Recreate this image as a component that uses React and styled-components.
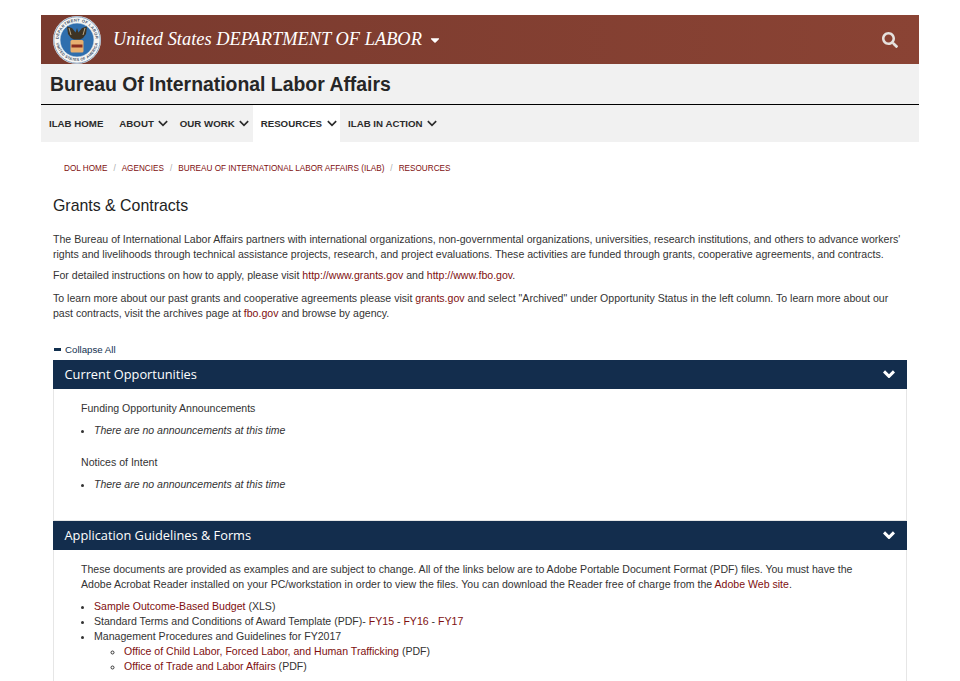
import styled, { createGlobalStyle } from "styled-components";
import { FaSearch, FaCaretDown } from "react-icons/fa";

const GlobalStyle = createGlobalStyle`
html, body {
    margin: 0;
    padding: 0;
    background: #fff;
    overflow: hidden;
}
body {
    font-family: "Liberation Sans", Arial, sans-serif;
    color: #333;
}
a {
    color: #800f0f;
    text-decoration: none;
}
`

const Page = styled.div`
width: 878px;
height: 681px;
margin-left: 41px;
padding-top: 15px;
box-sizing: border-box;
overflow: hidden;
`

const TopBar = styled.div`
height: 49px;
display: flex;
align-items: center;
padding: 0 21px 0 12px;
background: linear-gradient(90deg, #793a2e, #8a4334);
`

const Agency = styled.div`
margin-left: 12px;
font-family: "Liberation Serif", "Times New Roman", serif;
font-style: italic;
font-size: 18.4px;
color: #fff;
display: flex;
align-items: center;
gap: 6px;
flex: 1;
`

const SearchIcon = styled(FaSearch)`
color: #e6e2df;
font-size: 16px;
`

const SiteTitle = styled.div`
height: 40px;
background: #f1f1f1;
border-bottom: 1px solid #000;
padding-left: 9px;
display: flex;
align-items: center;
font-size: 19.4px;
font-weight: 700;
color: #262626;
`

const Nav = styled.div`
height: 37px;
background: #f1f1f1;
display: flex;
`

const NavItem = styled.div`
display: flex;
align-items: center;
gap: 4.5px;
padding: 0 ${(props) => (props.$plain ? "8px" : "3.5px")} 0 8px;
font-size: 9.7px;
font-weight: 700;
color: #2b2b2b;
background: ${(props) => (props.$active ? "#fff" : "transparent")};
`

const Content = styled.div`
padding: 0 12px;
`

const Crumbs = styled.div`
display: flex;
padding: 21px 0 0 11px;
height: 11px;
line-height: 11px;
font-size: 8.2px;
color: #aaa;
a { color: #800f0f; }
span { margin: 0 6px; }
`

const Title = styled.h1`
margin: 22px 0 0;
font-size: 15.9px;
line-height: 20px;
font-weight: 400;
color: #222;
`

const Para = styled.p`
margin: ${(props) => props.$top} 0 0;
font-size: 10.57px;
line-height: 15px;
color: #333;
`

const Collapse = styled.div`
margin-top: 21px;
height: 14px;
display: flex;
align-items: center;
gap: 4px;
padding-left: 1px;
font-size: 9.7px;
color: #12304f;
i {
    width: 7px;
    height: 3px;
    background: #12304f;
}
`

const Panel = styled.section`
width: 854px;
margin-top: ${(props) => props.$top};
box-sizing: border-box;
border: 1px solid #e6e6e6;
border-top: 0;
`

const PanelHead = styled.div`
height: 29px;
box-sizing: border-box;
margin: 0 -1px;
padding: 0 12px 1px 11.5px;
display: flex;
align-items: center;
justify-content: space-between;
background: #132d4d;
color: #fff;
font-family: "Open Sans", "Liberation Sans", sans-serif;
font-size: 12.8px;
`

const PanelBody = styled.div`
padding: 12px 27px 0;
height: ${(props) => props.$height};
`

const SubHead = styled.div`
font-size: 10.57px;
line-height: 15px;
margin-top: ${(props) => props.$top || "0"};
color: #333;
`

const List = styled.ul`
margin: ${(props) => props.$top || "0"} 0 0;
padding-left: ${(props) => props.$indent || "13px"};
font-size: 10.57px;
line-height: 15px;
list-style: ${(props) => props.$kind || "disc"};
color: #333;
em { font-style: italic; font-size: 10.5px; }
`

function Chevron({ size = 10, width = 2 }) {
    return (
        <svg width={size} height={size * 0.7} viewBox="0 0 12 8" fill="none" stroke="currentColor" strokeWidth={width}>
            <path d="M1 1.2 L6 6.2 L11 1.2" />
        </svg>
    )
}

function Seal() {
    return (
        <svg width="48" height="48" viewBox="0 0 48 48">
            <defs>
                <path id="sealTop" d="M5.5 24 A18.5 18.5 0 0 1 42.5 24" />
                <path id="sealBottom" d="M3 24 A21 21 0 0 0 45 24" />
            </defs>
            <circle cx="24" cy="24" r="24" fill="#f6f6f4" />
            <circle cx="24" cy="24" r="23.2" fill="none" stroke="#6d8fb5" strokeWidth="0.8" />
            <text fontFamily="Liberation Sans, sans-serif" fontSize="4" fontWeight="700" fill="#3d4f68" letterSpacing="0.35">
                <textPath href="#sealTop" startOffset="50%" textAnchor="middle">DEPARTMENT OF LABOR</textPath>
            </text>
            <text fontFamily="Liberation Sans, sans-serif" fontSize="3.8" fontWeight="700" fill="#3d4f68" letterSpacing="0.2">
                <textPath href="#sealBottom" startOffset="50%" textAnchor="middle">UNITED STATES OF AMERICA</textPath>
            </text>
            <circle cx="24" cy="24" r="17" fill="#2f6fae" stroke="#dfe6ee" strokeWidth="0.7" />
            <path d="M24 12 L22.6 16.5 L19 12 L14 10.5 L15 18 L18 22 L21 23.5 L27 23.5 L30 22 L33 18 L34 10.5 L29 12 L25.4 16.5 Z" fill="#3d3324" />
            <path d="M16 12 L18 19 M32 12 L30 19" stroke="#b9a887" strokeWidth="1" />
            <rect x="17.5" y="24" width="13" height="12.5" rx="1.5" fill="#e8b070" />
            <rect x="18.5" y="28.5" width="11" height="3" fill="#8a2e20" />
        </svg>
    )
}

export default function App() {
    return (
        <Page>
            <GlobalStyle />
            <TopBar>
                <Seal />
                <Agency>
                    United States DEPARTMENT OF LABOR
                    <FaCaretDown size={14} />
                </Agency>
                <SearchIcon />
            </TopBar>
            <SiteTitle>Bureau Of International Labor Affairs</SiteTitle>
            <Nav>
                <NavItem $plain>ILAB HOME</NavItem>
                <NavItem>ABOUT <Chevron /></NavItem>
                <NavItem>OUR WORK <Chevron /></NavItem>
                <NavItem $active>RESOURCES <Chevron /></NavItem>
                <NavItem>ILAB IN ACTION <Chevron /></NavItem>
            </Nav>
            <Content>
                <Crumbs>
                    <a href="#">DOL HOME</a><span>/</span>
                    <a href="#">AGENCIES</a><span>/</span>
                    <a href="#">BUREAU OF INTERNATIONAL LABOR AFFAIRS (ILAB)</a><span>/</span>
                    <a href="#">RESOURCES</a>
                </Crumbs>
                <Title>Grants &amp; Contracts</Title>
                <Para $top="16px">
                    The Bureau of International Labor Affairs partners with international organizations, non-governmental organizations, universities, research institutions, and others to advance workers' rights and livelihoods through technical assistance projects, research, and project evaluations. These activities are funded through grants, cooperative agreements, and contracts.
                </Para>
                <Para $top="6px">
                    For detailed instructions on how to apply, please visit <a href="#">http://www.grants.gov</a> and <a href="#">http://www.fbo.gov</a>.
                </Para>
                <Para $top="8px">
                    To learn more about our past grants and cooperative agreements please visit <a href="#">grants.gov</a> and select "Archived" under Opportunity Status in the left column. To learn more about our past contracts, visit the archives page at <a href="#">fbo.gov</a> and browse by agency.
                </Para>
                <Collapse><i />Collapse All</Collapse>
                <Panel $top="4px">
                    <PanelHead>Current Opportunities<Chevron size={12} width={3} /></PanelHead>
                    <PanelBody $height="119px">
                        <SubHead>Funding Opportunity Announcements</SubHead>
                        <List $top="7px"><li><em>There are no announcements at this time</em></li></List>
                        <SubHead $top="17px">Notices of Intent</SubHead>
                        <List $top="7px"><li><em>There are no announcements at this time</em></li></List>
                    </PanelBody>
                </Panel>
                <Panel $top="0">
                    <PanelHead>Application Guidelines &amp; Forms<Chevron size={12} width={3} /></PanelHead>
                    <PanelBody $height="200px">
                        <SubHead>
                            These documents are provided as examples and are subject to change. All of the links below are to Adobe Portable Document Format (PDF) files. You must have the Adobe Acrobat Reader installed on your PC/workstation in order to view the files. You can download the Reader free of charge from the <a href="#">Adobe Web site</a>.
                        </SubHead>
                        <List $top="7px">
                            <li><a href="#">Sample Outcome-Based Budget</a> (XLS)</li>
                            <li>Standard Terms and Conditions of Award Template (PDF)- <a href="#">FY15</a> - <a href="#">FY16</a> - <a href="#">FY17</a></li>
                            <li>Management Procedures and Guidelines for FY2017
                                <List $kind="circle" $indent="30px">
                                    <li><a href="#">Office of Child Labor, Forced Labor, and Human Trafficking</a> (PDF)</li>
                                    <li><a href="#">Office of Trade and Labor Affairs</a> (PDF)</li>
                                </List>
                            </li>
                        </List>
                    </PanelBody>
                </Panel>
            </Content>
        </Page>
    )
}
